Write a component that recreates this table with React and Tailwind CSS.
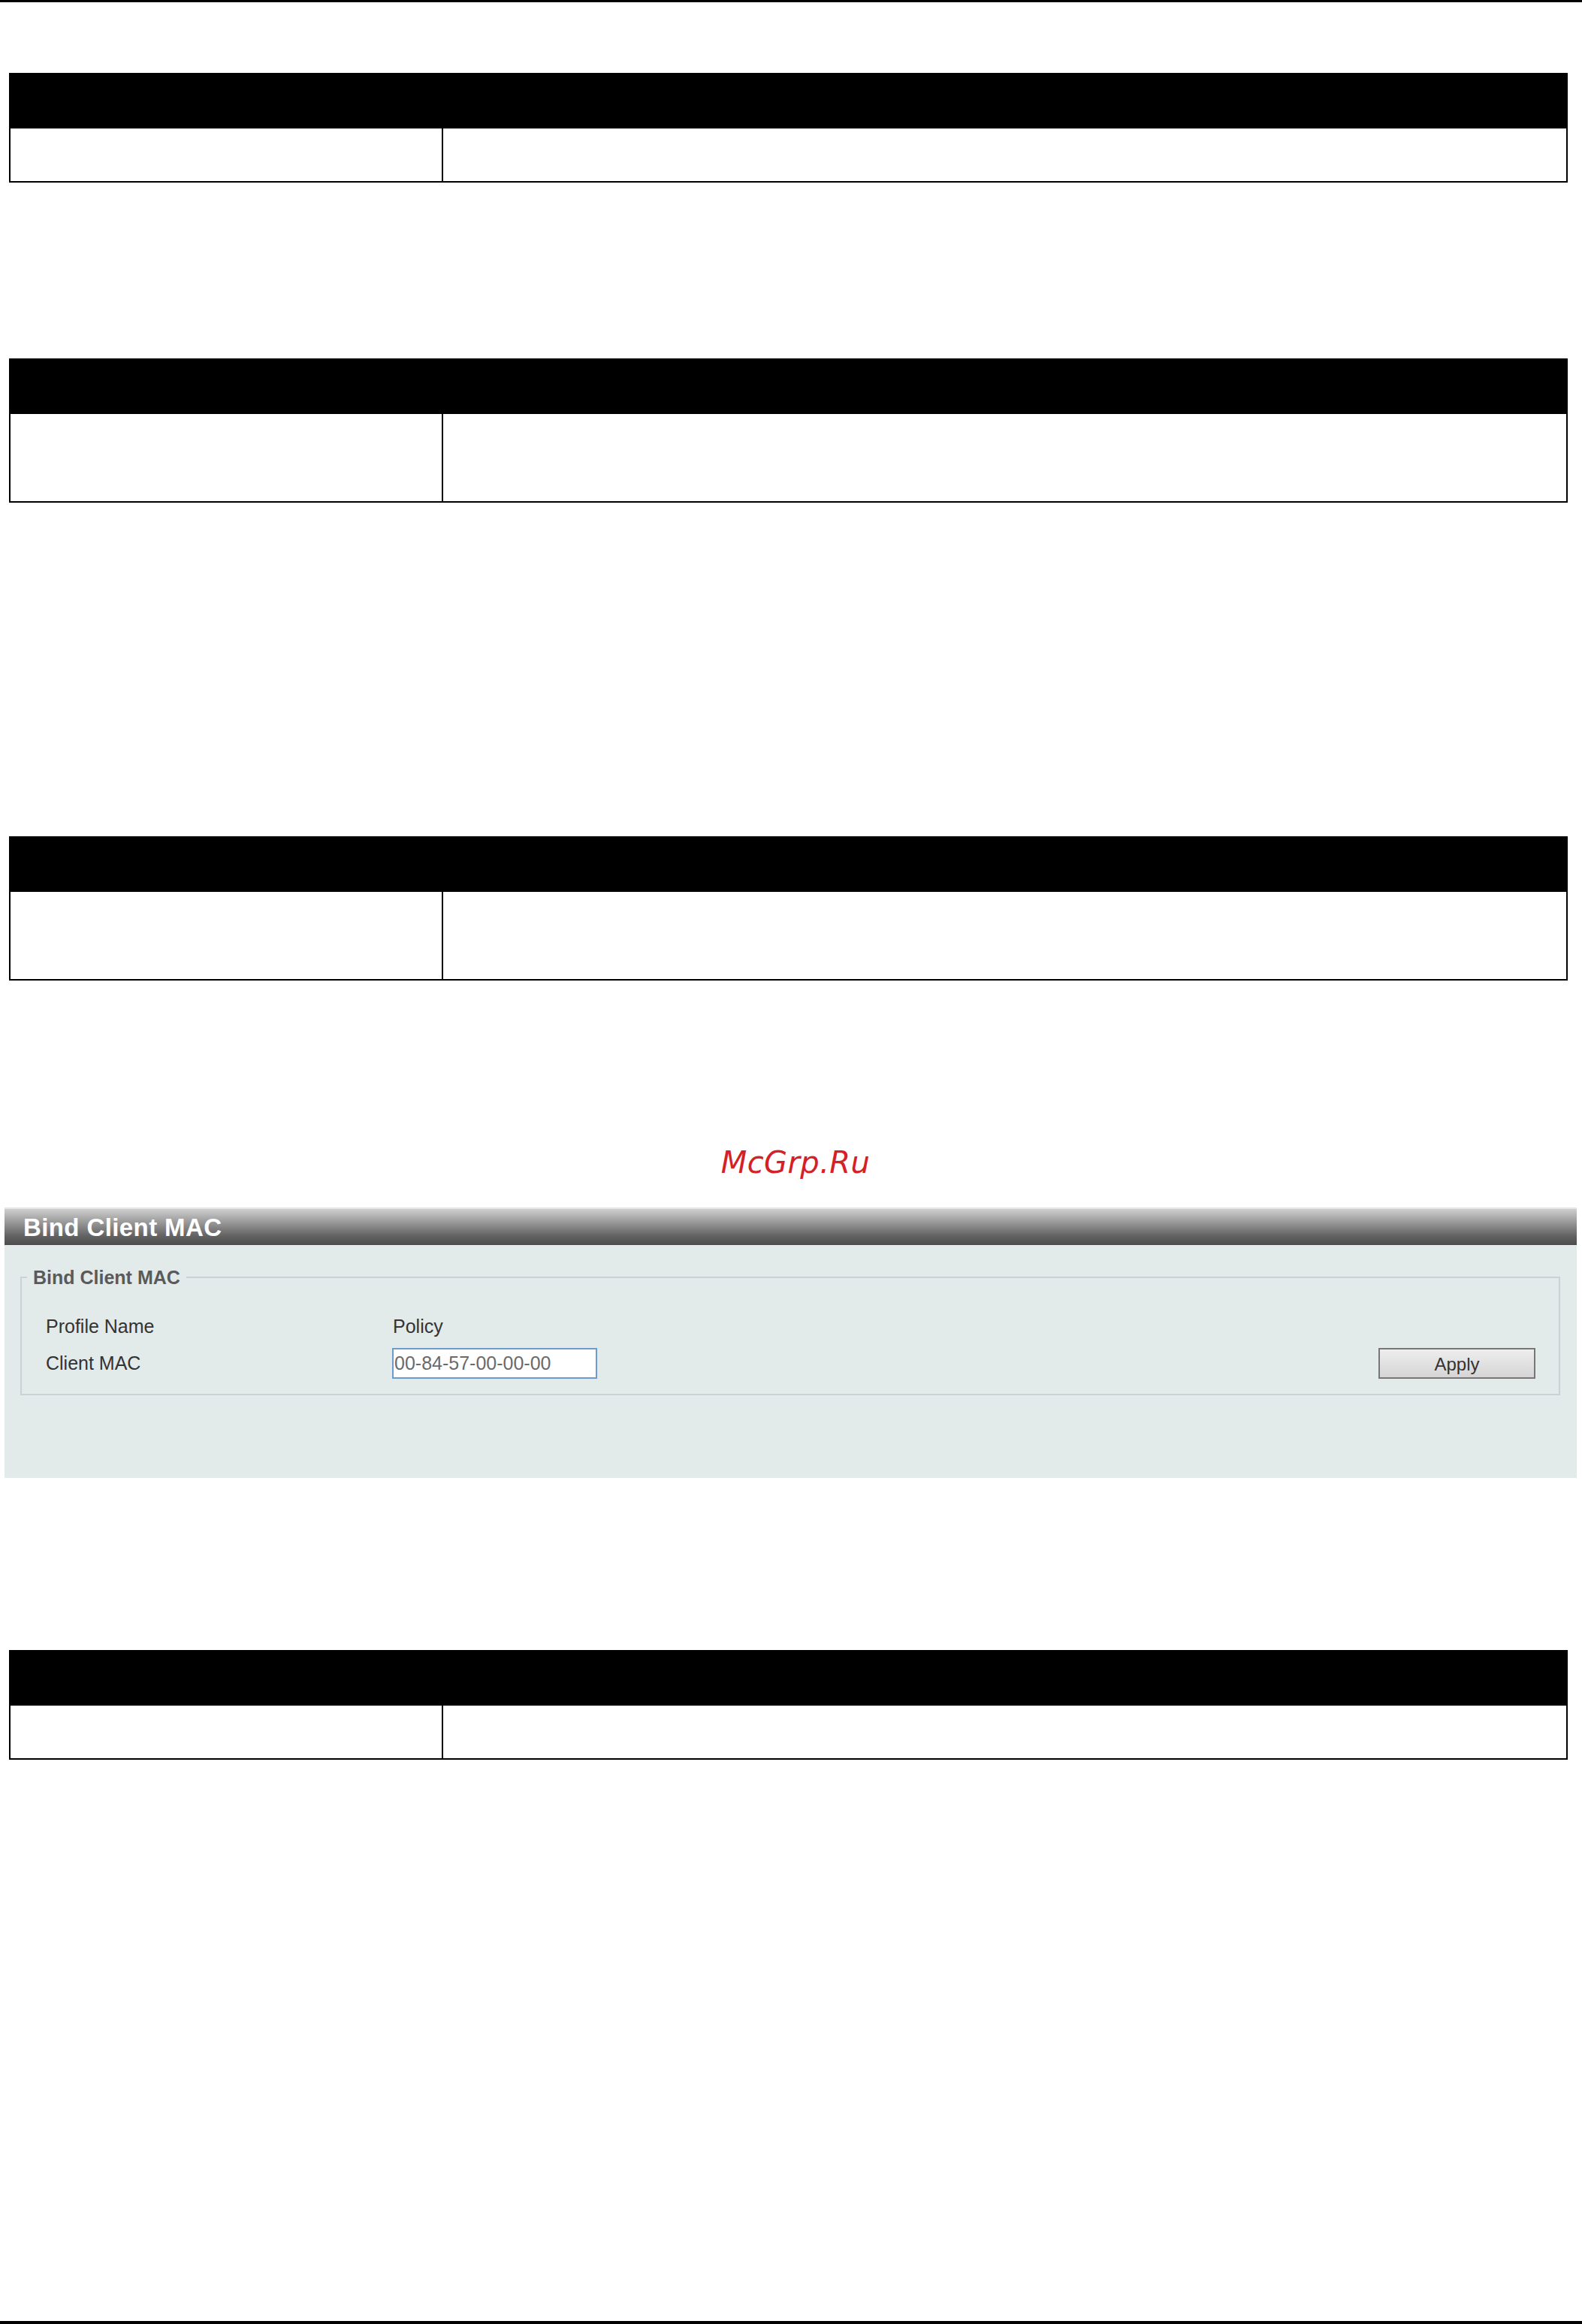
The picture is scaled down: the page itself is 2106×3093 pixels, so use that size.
import React from "react";

function DocTable({ bodyH }) {
  return (
    <div className="ml-[12px] w-[2075px] flex flex-col">
      <div className="h-[74px] bg-black" />
      <div className={`flex border-l-2 border-r-2 border-b-2 border-black ${bodyH}`}>
        <div className="w-[574px] shrink-0" />
        <div className="flex-1 border-l-2 border-black" />
      </div>
    </div>
  );
}

export default function App() {
  return (
    <div
      className="w-[2106px] h-[3093px] bg-white flex flex-col overflow-hidden"
      style={{ fontFamily: '"Liberation Sans", Arial, sans-serif' }}
    >
      <div className="h-[3px] bg-black shrink-0" />

      <div className="mt-[94px]">
        <DocTable bodyH="h-[72px]" />
      </div>

      <div className="mt-[234px]">
        <DocTable bodyH="h-[118px]" />
      </div>

      <div className="mt-[444px]">
        <DocTable bodyH="h-[118px]" />
      </div>

      <div
        className="mt-[217px] h-[50px] leading-[50px] text-center pl-[12px] text-[40px] italic tracking-[0.4px] text-[#d42026]"
        style={{ fontFamily: '"DejaVu Sans", sans-serif' }}
      >
        McGrp.Ru
      </div>

      {/* Bind Client MAC panel */}
      <div className="mt-[35px] ml-[6px] w-[2093px] h-[360px] flex flex-col bg-[#e2eaea]">
        <div className="h-[50px] shrink-0 flex items-center pl-[25px] border-t-2 border-[#e6e6e6] bg-[linear-gradient(to_bottom,#cfcfcf,#a3a3a3_30%,#626262_75%,#4c4c4c)]">
          <span className="text-white font-bold text-[33px] leading-none tracking-[0.4px]">
            Bind Client MAC
          </span>
        </div>
        <div className="flex-1 pt-[29px] pl-[21px] pr-[22px]">
          <fieldset className="border-2 border-[#c7d3d5] p-0 m-0">
            <legend className="ml-[7px] px-[8px] text-[25px] leading-[28px] font-bold text-[#5a5a5a]">
              Bind Client MAC
            </legend>
            <div className="pt-[37px] pb-[20px] pl-[32px] pr-[31px] flex flex-col gap-[13px]">
              <div className="h-[30px] flex items-center text-[25px] text-[#333]">
                <div className="w-[462px] shrink-0">Profile Name</div>
                <div>Policy</div>
              </div>
              <div className="h-[41px] flex items-center text-[25px] text-[#333]">
                <div className="w-[461px] shrink-0">Client MAC</div>
                <input
                  readOnly
                  value="00-84-57-00-00-00"
                  className="w-[273px] h-[41px] border-2 border-[#6c9bcf] bg-white pl-[1px] text-[25px] text-[#6a6a6a] outline-none"
                  style={{ fontFamily: '"Liberation Sans", Arial, sans-serif' }}
                />
                <div className="flex-1" />
                <button
                  className="w-[209px] h-[41px] border-2 border-[#777] bg-[linear-gradient(to_bottom,#eeeeee,#d5d5d5)] text-[24px] text-[#333] leading-none pt-[2px]"
                  style={{ fontFamily: '"Liberation Sans", Arial, sans-serif' }}
                >
                  Apply
                </button>
              </div>
            </div>
          </fieldset>
        </div>
      </div>

      <div className="mt-[229px]">
        <DocTable bodyH="h-[72px]" />
      </div>

      <div className="flex-1" />
      <div className="h-[4px] bg-black shrink-0" />
    </div>
  );
}
